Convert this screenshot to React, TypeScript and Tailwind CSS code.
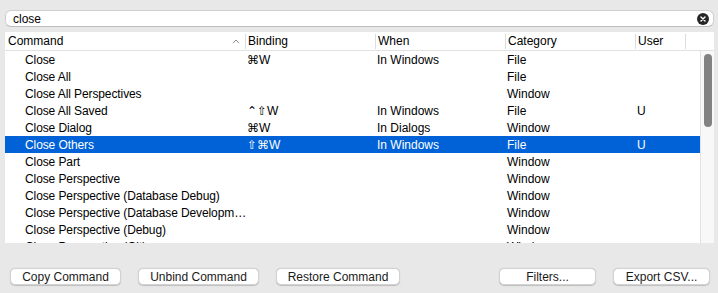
import React from "react";

type Row = { cmd: string; bind?: string; when?: string; cat: string; user?: string; sel?: boolean };

const rows: Row[] = [
  { cmd: "Close", bind: "⌘W", when: "In Windows", cat: "File" },
  { cmd: "Close All", cat: "File" },
  { cmd: "Close All Perspectives", cat: "Window" },
  { cmd: "Close All Saved", bind: "⌃⇧W", when: "In Windows", cat: "File", user: "U" },
  { cmd: "Close Dialog", bind: "⌘W", when: "In Dialogs", cat: "Window" },
  { cmd: "Close Others", bind: "⇧⌘W", when: "In Windows", cat: "File", user: "U", sel: true },
  { cmd: "Close Part", cat: "Window" },
  { cmd: "Close Perspective", cat: "Window" },
  { cmd: "Close Perspective (Database Debug)", cat: "Window" },
  { cmd: "Close Perspective (Database Developm…", cat: "Window" },
  { cmd: "Close Perspective (Debug)", cat: "Window" },
  { cmd: "Close Perspective (Git)", cat: "Window" },
];

const buttons = [
  { label: "Copy Command", w: "w-[111px]" },
  { label: "Unbind Command", w: "w-[121px]" },
  { label: "Restore Command", w: "w-[124px]" },
];

function Button({ label, w }: { label: string; w: string }) {
  return (
    <button className={`${w} h-[17px] rounded-[5px] bg-white border border-[#d2d2d2] shadow-[0_0.5px_1px_rgba(0,0,0,0.18)] text-[12px] leading-none text-[#1a1a1a] flex items-center justify-center`}>
      {label}
    </button>
  );
}

export default function App() {
  return (
    <div
      className="w-[718px] h-[293px] overflow-hidden bg-[#e8e8e8] text-[12px] text-black flex flex-col"
      style={{ fontFamily: '"Liberation Sans", "DejaVu Sans", sans-serif' }}
    >
      {/* search */}
      <div className="mt-[10px] mx-[5px] w-[709px] h-[17px] bg-white border border-[#cfcfcf] border-b-[#bdbdbd] rounded-[6px] flex items-center pl-[7px] pr-[4px]">
        <span className="flex-1 leading-none">close</span>
        <span className="w-[12px] h-[12px] rounded-full bg-[#262626] flex items-center justify-center">
          <svg width="6" height="6" viewBox="0 0 6 6">
            <path d="M1 1L5 5M5 1L1 5" stroke="white" strokeWidth="1.4" strokeLinecap="round" />
          </svg>
        </span>
      </div>

      {/* table */}
      <div className="mt-[5px] ml-[5px] w-[709px] flex flex-col">
        {/* header */}
        <div className="h-[19px] bg-white border-b border-[#e1e1e1] flex items-center">
          <div className="w-[240px] pl-[3px] pr-[4px] flex items-center justify-between">
            <span>Command</span>
            <svg width="8" height="5" viewBox="0 0 8 5" className="mr-[1px]">
              <path d="M1 4.2L4 1L7 4.2" fill="none" stroke="#8a8a8a" strokeWidth="1" />
            </svg>
          </div>
          <div className="w-[130px] h-[15px] border-l border-[#dcdcdc] pl-[2px] flex items-center">Binding</div>
          <div className="w-[130px] h-[15px] border-l border-[#dcdcdc] pl-[2px] flex items-center">When</div>
          <div className="w-[130px] h-[15px] border-l border-[#dcdcdc] pl-[2px] flex items-center">Category</div>
          <div className="w-[50px] h-[15px] border-l border-[#dcdcdc] pl-[2px] flex items-center">User</div>
          <div className="flex-1 h-[15px] border-l border-[#dcdcdc]" />
        </div>

        {/* body */}
        <div className="h-[192px] flex">
          <div className="w-[695px] bg-white overflow-hidden">
            {rows.map((r) => (
              <div
                key={r.cmd}
                className={`h-[17px] flex items-center ${r.sel ? "bg-[#0062d6] text-white" : ""}`}
              >
                <div className="w-[240px] shrink-0 pl-[20px] whitespace-nowrap tracking-[-0.1px]">{r.cmd}</div>
                <div className="w-[130px] pl-[2px]">{r.bind}</div>
                <div className="w-[130px] pl-[2px]">{r.when}</div>
                <div className="w-[130px] pl-[2px]">{r.cat}</div>
                <div className="w-[50px] pl-[2px]">{r.user}</div>
              </div>
            ))}
          </div>
          <div className="flex-1 bg-[#f8f8f8] border-l border-[#e2e2e2] pt-[3px] flex justify-center">
            <div className="w-[8px] h-[73px] rounded-full bg-[#828282]" />
          </div>
        </div>
      </div>

      {/* buttons */}
      <div className="mt-[25px] pl-[10px] pr-[8px] flex gap-[17px]">
        {buttons.map((b) => (
          <Button key={b.label} {...b} />
        ))}
        <div className="flex-1" />
        <Button label="Filters..." w="w-[97px]" />
        <Button label="Export CSV..." w="w-[97px]" />
      </div>
    </div>
  );
}
